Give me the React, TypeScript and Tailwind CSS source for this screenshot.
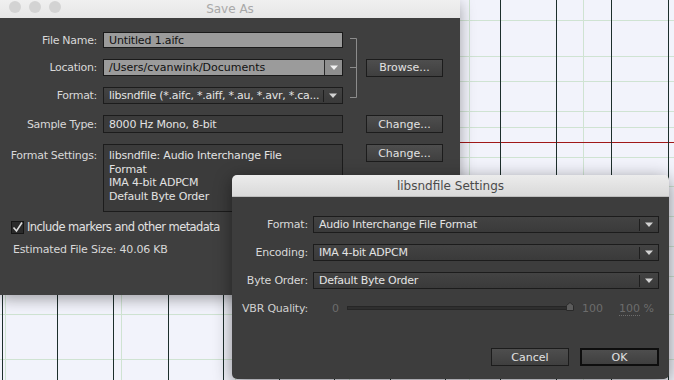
import type { ReactNode } from "react";

// ---------------------------------------------------------------------------
// Desktop backdrop (score paper grid behind the dialogs)
// ---------------------------------------------------------------------------

const DARK_V = [2, 57, 113, 168, 223, 279, 334, 390, 445, 500, 556, 611, 668];
const GREEN_V = [5, 121, 235, 349, 469, 583];
const GREEN_H = [20, 56, 81, 111, 127, 157, 186, 216, 246, 276, 314, 359];

function Arrow({ color = "#d2d2d2" }: { color?: string }): ReactNode {
  return (
    <svg width="8" height="5" viewBox="0 0 8 5">
      <path d="M0 0.5h8L4 5z" fill={color} />
    </svg>
  );
}

function DarkSelect({ value }: { value: string }): ReactNode {
  return (
    <div className="flex h-full items-center border border-[#1c1c1c] bg-gradient-to-b from-[#434343] to-[#3a3a3a]">
      <span className="flex-1 overflow-hidden whitespace-nowrap pl-[5px] tracking-[-0.25px] text-[#e4e4e4]">{value}</span>
      <span className="h-[12px] w-px bg-[#1e1e1e]" />
      <span className="flex w-[18px] justify-center">
        <Arrow />
      </span>
    </div>
  );
}

function Button({ label, primary }: { label: string; primary?: boolean }): ReactNode {
  return (
    <div
      className={`flex h-[18px] items-center justify-center bg-gradient-to-b from-[#4e4e4e] to-[#3f3f3f] text-[#e2e2e2] ${
        primary ? "border-2 border-[#0e0e0e]" : "border border-[#1c1c1c]"
      }`}
    >
      {label}
    </div>
  );
}

function Bracket(): ReactNode {
  return (
    <svg width="23" height="72" viewBox="0 0 23 72" className="mt-[6px]">
      <path d="M7 0.5h6.5v59H7M7 29.5h6.5" fill="none" stroke="#8c8c8c" strokeWidth="1" />
    </svg>
  );
}

// ---------------------------------------------------------------------------
// Save As window
// ---------------------------------------------------------------------------

function SaveAsWindow(): ReactNode {
  const label = "self-center pr-[6px] text-right tracking-[-0.3px] text-[#d8d8d8]";

  return (
    <div className="absolute left-0 top-0 flex h-[295px] w-[460px] flex-col shadow-[0_4px_14px_rgba(0,0,0,0.35)]">
      <div className="relative flex h-[18px] items-center bg-gradient-to-b from-[#f0f0f0] to-[#e6e6e6]">
        <div className="absolute left-[9px] top-[1px] flex gap-[8px]">
          <span className="h-[12px] w-[12px] rounded-full bg-[#d3d3d3]" />
          <span className="h-[12px] w-[12px] rounded-full bg-[#d3d3d3]" />
          <span className="h-[12px] w-[12px] rounded-full bg-[#d3d3d3]" />
        </div>
        <span className="w-full text-center text-[12px] leading-[18px] text-[#a8a8a8]">Save As</span>
      </div>

      <div className="flex-1 bg-[#3f3f3f] pt-[14px] text-[11px] leading-[13px]">
        <div className="grid grid-cols-[103px_240px_23px_77px] grid-rows-[16px_17px_17px_18px_68px] gap-y-[11px]">
          {/* File Name */}
          <span className={label}>File Name:</span>
          <div className="flex items-center border border-[#1a1a1a] bg-[#9b9b9b] pl-[5px] tracking-[-0.15px] text-[#111]">Untitled 1.aifc</div>
          <div className="row-span-3">
            <Bracket />
          </div>
          <span />

          {/* Location */}
          <span className={label}>Location:</span>
          <div className="flex items-center border border-[#1a1a1a] bg-[#9b9b9b] text-[#111]">
            <span className="flex-1 pl-[5px]">/Users/cvanwink/Documents</span>
            <span className="h-full w-px bg-[#2a2a2a]" />
            <span className="flex w-[17px] items-center justify-center self-stretch bg-[#8f8f8f]">
              <Arrow color="#f2f2f2" />
            </span>
          </div>
          <div className="self-center">
            <Button label="Browse..." />
          </div>

          {/* Format */}
          <span className={label}>Format:</span>
          <DarkSelect value="libsndfile (*.aifc, *.aiff, *.au, *.avr, *.ca..." />
          <span />

          {/* Sample Type */}
          <span className={label}>Sample Type:</span>
          <div className="flex items-center border border-[#1c1c1c] bg-[#3b3b3b] pl-[5px] tracking-[-0.2px] text-[#e2e2e2]">8000 Hz Mono, 8-bit</div>
          <span />
          <Button label="Change..." />

          {/* Format Settings */}
          <span className="self-start pr-[6px] pt-[5px] text-right tracking-[-0.3px] text-[#d8d8d8]">Format Settings:</span>
          <div className="border border-[#1c1c1c] bg-[#3b3b3b] px-[5px] pt-[4px] leading-[13.5px] tracking-[-0.2px] text-[#e2e2e2]">
            <div>libsndfile: Audio Interchange File</div>
            <div>Format</div>
            <div>IMA 4-bit ADPCM</div>
            <div>Default Byte Order</div>
          </div>
          <span />
          <div className="self-start">
            <Button label="Change..." />
          </div>
        </div>

        <div className="mt-[9px] flex items-center pl-[11px]">
          <span className="flex h-[13px] w-[13px] items-center justify-center border border-[#151515] bg-[#2a2a2a]">
            <svg width="11" height="11" viewBox="0 0 11 11">
              <path d="M1.5 5.5l3 3.5L10 0.5" fill="none" stroke="#dcdcdc" strokeWidth="1.6" />
            </svg>
          </span>
          <span className="ml-[3px] text-[11.5px] tracking-[-0.55px] text-[#e2e2e2]">Include markers and other metadata</span>
        </div>

        <div className="mt-[9px] pl-[13px] tracking-[-0.2px] text-[#d8d8d8]">Estimated File Size: 40.06 KB</div>
      </div>
    </div>
  );
}

// ---------------------------------------------------------------------------
// libsndfile Settings window
// ---------------------------------------------------------------------------

function SettingsWindow(): ReactNode {
  const label = "self-center pr-[5px] text-right tracking-[-0.2px] text-[#d8d8d8]";

  return (
    <div className="absolute left-[232px] top-[175px] flex h-[204px] w-[437px] flex-col overflow-hidden rounded-[5px] shadow-[0_4px_18px_rgba(0,0,0,0.45)]">
      <div className="flex h-[22px] items-center justify-center border-b border-[#bdbdbd] bg-gradient-to-b from-[#ececec] to-[#d9d9d9] text-[12px] text-[#4b4b4b]">
        libsndfile Settings
      </div>
      <div className="flex-1 bg-[#3d3d3d] pt-[19px] text-[11px] leading-[13px]">
        <div className="grid grid-cols-[81px_346px] grid-rows-[17px_17px_17px] gap-y-[11px]">
          <span className={label}>Format:</span>
          <DarkSelect value="Audio Interchange File Format" />
          <span className={label}>Encoding:</span>
          <DarkSelect value="IMA 4-bit ADPCM" />
          <span className={label}>Byte Order:</span>
          <DarkSelect value="Default Byte Order" />
        </div>

        <div className="mt-[12px] grid h-[14px] grid-cols-[81px_346px] items-center">
          <span className="pr-[5px] text-right tracking-[-0.2px] text-[#cfcfcf]">VBR Quality:</span>
          <div className="flex items-center text-[#6c6c6c]">
            <span className="ml-[19px] w-[15px]">0</span>
            <div className="relative h-[4px] w-[227px] border border-[#262626] bg-[#2f2f2f]">
              <svg width="8" height="9" viewBox="0 0 8 9" className="absolute right-[-1px] top-[-5px]">
                <path d="M0.5 8.5V3.5L4 0.5L7.5 3.5V8.5z" fill="#5c5c5c" stroke="#2a2a2a" strokeWidth="1" />
              </svg>
            </div>
            <span className="ml-[8px] w-[37px]">100</span>
            <span>
              <span className="border-b border-dotted border-[#6c6c6c]">100</span> %
            </span>
          </div>
        </div>

        <div className="mt-[33px] flex justify-end gap-[11px] pr-[10px]">
          <div className="w-[78px]">
            <Button label="Cancel" />
          </div>
          <div className="w-[79px]">
            <Button label="OK" primary />
          </div>
        </div>
      </div>
    </div>
  );
}

// ---------------------------------------------------------------------------
// App
// ---------------------------------------------------------------------------

export default function App(): ReactNode {
  return (
    <div className="relative h-[380px] w-[674px] overflow-hidden bg-[#f2f3fb] font-['DejaVu_Sans',sans-serif]">
      {GREEN_H.map((y) => (
        <div key={`h${y}`} className="absolute left-0 h-px w-full bg-[#cfe3d2]" style={{ top: y }} />
      ))}
      {GREEN_V.map((x) => (
        <div key={`g${x}`} className="absolute top-0 h-full w-px bg-[#cfe3d2]" style={{ left: x }} />
      ))}
      <div className="absolute left-0 top-[142px] h-px w-full bg-[#a01818]" />
      {DARK_V.map((x) => (
        <div key={`d${x}`} className="absolute top-0 h-full w-px bg-[#1d2e2c]" style={{ left: x }} />
      ))}

      <SaveAsWindow />
      <SettingsWindow />
    </div>
  );
}
